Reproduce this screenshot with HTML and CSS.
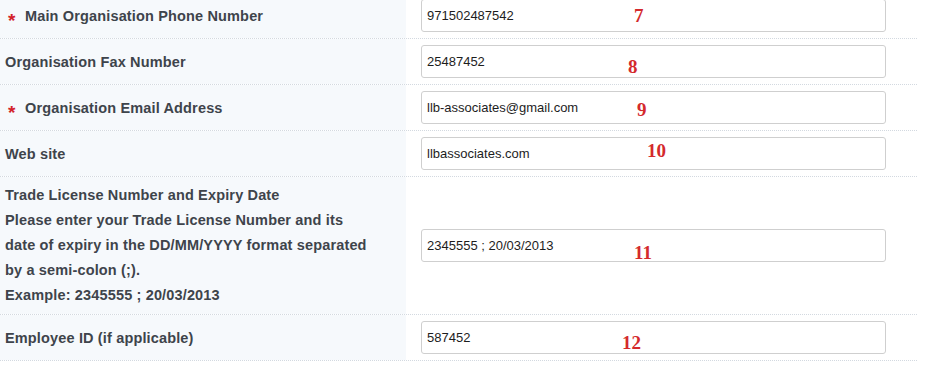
FILE: index.html
```html
<!DOCTYPE html>
<html>
<head>
    <title>Organisation Details</title>
    <link rel="stylesheet" href="styles.css">
</head>
<body>
    <div class="form">
        <div class="row">
            <div class="label"><span class="req">*</span>Main Organisation Phone Number</div>
            <div class="field">
                <input type="text" value="971502487542">
                <span class="mark n7">7</span>
            </div>
        </div>
        <div class="row">
            <div class="label">Organisation Fax Number</div>
            <div class="field">
                <input type="text" value="25487452">
                <span class="mark n8">8</span>
            </div>
        </div>
        <div class="row">
            <div class="label"><span class="req">*</span>Organisation Email Address</div>
            <div class="field">
                <input type="text" value="llb-associates@gmail.com">
                <span class="mark n9">9</span>
            </div>
        </div>
        <div class="row">
            <div class="label">Web site</div>
            <div class="field">
                <input type="text" value="llbassociates.com">
                <span class="mark n10">10</span>
            </div>
        </div>
        <div class="row">
            <div class="label multi">
                Trade License Number and Expiry Date<br>
                Please enter your Trade License Number and its<br>
                date of expiry in the DD/MM/YYYY format separated<br>
                by a semi-colon (;).<br>
                Example: 2345555 ; 20/03/2013
            </div>
            <div class="field">
                <input type="text" value="2345555 ; 20/03/2013">
                <span class="mark n11">11</span>
            </div>
        </div>
        <div class="row">
            <div class="label">Employee ID (if applicable)</div>
            <div class="field">
                <input type="text" value="587452">
                <span class="mark n12">12</span>
            </div>
        </div>
    </div>
</body>
</html>
```

FILE: styles.css
```css
body {
    margin: 0;
    font-family: "Liberation Sans", Arial, sans-serif;
    background: #fff;
}

.form {
    width: 917px;
    margin-top: -7px;
}

.row {
    display: grid;
    grid-template-columns: 406px 511px;
    border-bottom: 1px dotted #d3d9e0;
}

.label {
    background-color: #f6f9fc;
    color: #3e444b;
    font-size: 14.5px;
    letter-spacing: 0.15px;
    font-weight: bold;
    padding: 0 5px;
    display: flex;
    align-items: center;
}

.label.multi {
    display: block;
    line-height: 25px;
    padding-top: 6px;
    padding-bottom: 6px;
}

.req {
    color: #d3222a;
    font-size: 19px;
    width: 17px;
    padding-left: 3px;
    position: relative;
    top: 5px;
}

.field {
    position: relative;
    padding: 6px 0 6px 15px;
    display: flex;
    align-items: center;
}

.field input {
    box-sizing: border-box;
    width: 465px;
    height: 33px;
    border: 1px solid #cfcfcf;
    border-radius: 3px;
    padding: 0 5px;
    font-family: "Liberation Sans", Arial, sans-serif;
    font-size: 13px;
    color: #1d1d1d;
    background: #fff;
}

/* red annotation numbers */
.mark {
    position: absolute;
    font-family: "Liberation Serif", "Times New Roman", serif;
    font-weight: bold;
    font-size: 19px;
    color: #d42a2c;
}

.n7 { left: 228px; top: 12px; }
.n8 { left: 222px; top: 17px; }
.n9 { left: 231px; top: 14px; }
.n10 { left: 241px; top: 9px; }
.n11 { left: 228px; top: 65px; }
.n12 { left: 216px; top: 17px; }
```
